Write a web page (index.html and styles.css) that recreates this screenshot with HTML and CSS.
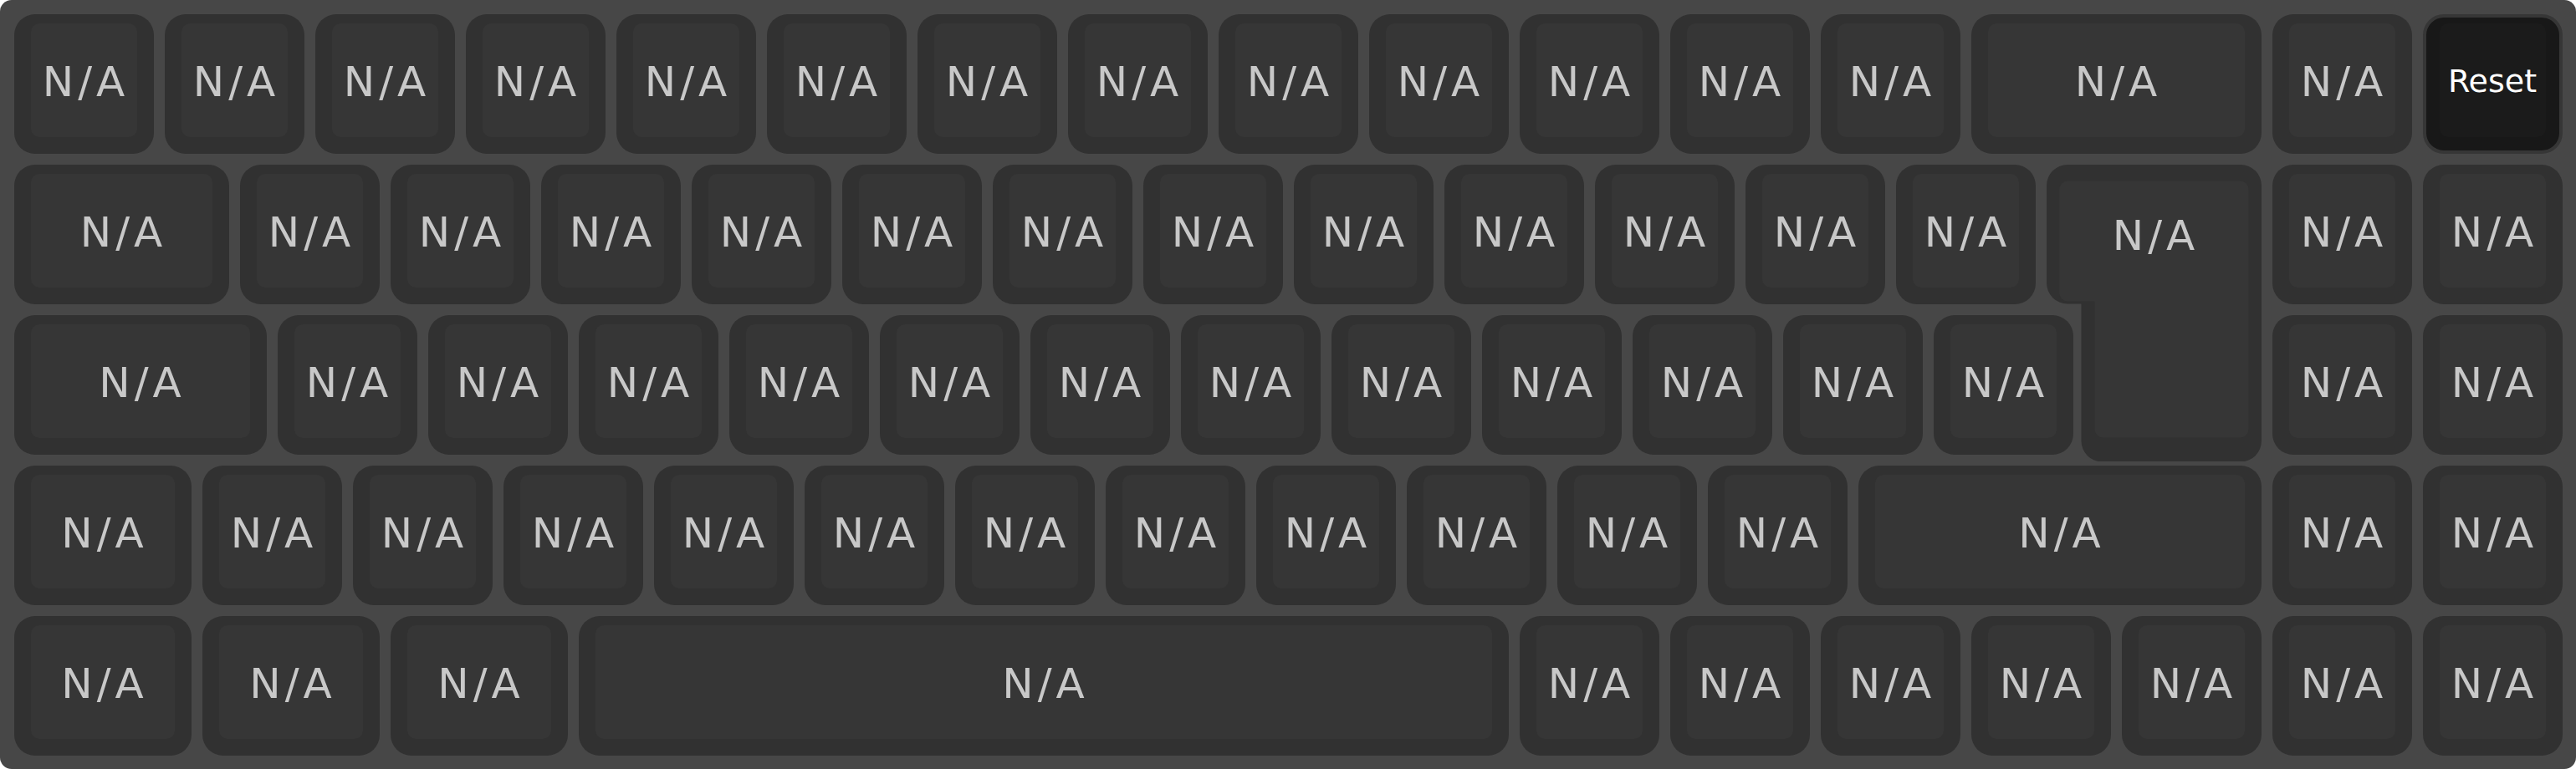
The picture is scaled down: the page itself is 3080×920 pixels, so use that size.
FILE: index.html
```html
<!DOCTYPE html>
<html lang="en">
<head>
<meta charset="utf-8">
<title>Keyboard</title>
<link rel="stylesheet" href="styles.css">
</head>
<body>
<div class="keyboard">
  <div class="row">
    <div class="key u1"><div class="face"><span class="label">N/A</span></div></div>
    <div class="key u1"><div class="face"><span class="label">N/A</span></div></div>
    <div class="key u1"><div class="face"><span class="label">N/A</span></div></div>
    <div class="key u1"><div class="face"><span class="label">N/A</span></div></div>
    <div class="key u1"><div class="face"><span class="label">N/A</span></div></div>
    <div class="key u1"><div class="face"><span class="label">N/A</span></div></div>
    <div class="key u1"><div class="face"><span class="label">N/A</span></div></div>
    <div class="key u1"><div class="face"><span class="label">N/A</span></div></div>
    <div class="key u1"><div class="face"><span class="label">N/A</span></div></div>
    <div class="key u1"><div class="face"><span class="label">N/A</span></div></div>
    <div class="key u1"><div class="face"><span class="label">N/A</span></div></div>
    <div class="key u1"><div class="face"><span class="label">N/A</span></div></div>
    <div class="key u1"><div class="face"><span class="label">N/A</span></div></div>
    <div class="key u2"><div class="face"><span class="label">N/A</span></div></div>
    <div class="key u1"><div class="face"><span class="label">N/A</span></div></div>
    <div class="key u1 reset"><div class="face"><span class="label">Reset</span></div></div>
  </div>
  <div class="row">
    <div class="key u15"><div class="face"><span class="label">N/A</span></div></div>
    <div class="key u1"><div class="face"><span class="label">N/A</span></div></div>
    <div class="key u1"><div class="face"><span class="label">N/A</span></div></div>
    <div class="key u1"><div class="face"><span class="label">N/A</span></div></div>
    <div class="key u1"><div class="face"><span class="label">N/A</span></div></div>
    <div class="key u1"><div class="face"><span class="label">N/A</span></div></div>
    <div class="key u1"><div class="face"><span class="label">N/A</span></div></div>
    <div class="key u1"><div class="face"><span class="label">N/A</span></div></div>
    <div class="key u1"><div class="face"><span class="label">N/A</span></div></div>
    <div class="key u1"><div class="face"><span class="label">N/A</span></div></div>
    <div class="key u1"><div class="face"><span class="label">N/A</span></div></div>
    <div class="key u1"><div class="face"><span class="label">N/A</span></div></div>
    <div class="key u1"><div class="face"><span class="label">N/A</span></div></div>
    <div class="key-enter">
      <svg class="enter-shape" width="257" height="355.5" viewBox="0 0 257 355.5" aria-hidden="true">
        <path fill="#313131" d="M25,0 H232 A25,25 0 0 1 257,25 V330.5 A25,25 0 0 1 232,355.5 H66.5 A25,25 0 0 1 41.5,330.5 V166.5 H25 A25,25 0 0 1 0,141.5 V25 A25,25 0 0 1 25,0 Z"/>
        <path fill="#363636" d="M25.2,19.5 H231.5 A10,10 0 0 1 241.5,29.5 V316.5 A10,10 0 0 1 231.5,326.5 H67.5 A10,10 0 0 1 57.5,316.5 V163.5 H25.2 A10,10 0 0 1 15.2,153.5 V29.5 A10,10 0 0 1 25.2,19.5 Z"/>
      </svg>
      <div class="enter-top"><span class="label">N/A</span></div>
    </div>
    <div class="key u1"><div class="face"><span class="label">N/A</span></div></div>
    <div class="key u1"><div class="face"><span class="label">N/A</span></div></div>
  </div>
  <div class="row">
    <div class="key u175"><div class="face"><span class="label">N/A</span></div></div>
    <div class="key u1"><div class="face"><span class="label">N/A</span></div></div>
    <div class="key u1"><div class="face"><span class="label">N/A</span></div></div>
    <div class="key u1"><div class="face"><span class="label">N/A</span></div></div>
    <div class="key u1"><div class="face"><span class="label">N/A</span></div></div>
    <div class="key u1"><div class="face"><span class="label">N/A</span></div></div>
    <div class="key u1"><div class="face"><span class="label">N/A</span></div></div>
    <div class="key u1"><div class="face"><span class="label">N/A</span></div></div>
    <div class="key u1"><div class="face"><span class="label">N/A</span></div></div>
    <div class="key u1"><div class="face"><span class="label">N/A</span></div></div>
    <div class="key u1"><div class="face"><span class="label">N/A</span></div></div>
    <div class="key u1"><div class="face"><span class="label">N/A</span></div></div>
    <div class="key u1"><div class="face"><span class="label">N/A</span></div></div>
    <div class="slot u125"></div>
    <div class="key u1"><div class="face"><span class="label">N/A</span></div></div>
    <div class="key u1"><div class="face"><span class="label">N/A</span></div></div>
  </div>
  <div class="row">
    <div class="key u125"><div class="face"><span class="label">N/A</span></div></div>
    <div class="key u1"><div class="face"><span class="label">N/A</span></div></div>
    <div class="key u1"><div class="face"><span class="label">N/A</span></div></div>
    <div class="key u1"><div class="face"><span class="label">N/A</span></div></div>
    <div class="key u1"><div class="face"><span class="label">N/A</span></div></div>
    <div class="key u1"><div class="face"><span class="label">N/A</span></div></div>
    <div class="key u1"><div class="face"><span class="label">N/A</span></div></div>
    <div class="key u1"><div class="face"><span class="label">N/A</span></div></div>
    <div class="key u1"><div class="face"><span class="label">N/A</span></div></div>
    <div class="key u1"><div class="face"><span class="label">N/A</span></div></div>
    <div class="key u1"><div class="face"><span class="label">N/A</span></div></div>
    <div class="key u1"><div class="face"><span class="label">N/A</span></div></div>
    <div class="key u275"><div class="face"><span class="label">N/A</span></div></div>
    <div class="key u1"><div class="face"><span class="label">N/A</span></div></div>
    <div class="key u1"><div class="face"><span class="label">N/A</span></div></div>
  </div>
  <div class="row">
    <div class="key u125"><div class="face"><span class="label">N/A</span></div></div>
    <div class="key u125"><div class="face"><span class="label">N/A</span></div></div>
    <div class="key u125"><div class="face"><span class="label">N/A</span></div></div>
    <div class="key u625"><div class="face"><span class="label">N/A</span></div></div>
    <div class="key u1"><div class="face"><span class="label">N/A</span></div></div>
    <div class="key u1"><div class="face"><span class="label">N/A</span></div></div>
    <div class="key u1"><div class="face"><span class="label">N/A</span></div></div>
    <div class="key u1"><div class="face"><span class="label">N/A</span></div></div>
    <div class="key u1"><div class="face"><span class="label">N/A</span></div></div>
    <div class="key u1"><div class="face"><span class="label">N/A</span></div></div>
    <div class="key u1"><div class="face"><span class="label">N/A</span></div></div>
  </div>
</div>
</body>
</html>
```
FILE: styles.css
```css
html, body {
  margin: 0;
  padding: 0;
  background: #ffffff;
}

.keyboard {
  width: 3080px;
  height: 920px;
  box-sizing: border-box;
  padding: 10px;
  background: #474747;
  border-radius: 14px;
  display: flex;
  flex-direction: column;
  font-family: "DejaVu Sans", "Liberation Sans", sans-serif;
}

.row {
  display: flex;
  height: 180px;
  flex: none;
}

.key {
  box-sizing: border-box;
  flex: none;
  height: 167px;
  margin: 6.5px;
  padding: 11.5px 20px 20px;
  background: #313131;
  border-radius: 25px;
  display: flex;
}

.slot {
  flex: none;
  height: 167px;
  margin: 6.5px;
}

.face {
  flex: 1;
  background: #363636;
  border-radius: 10px;
  display: flex;
  align-items: center;
  justify-content: center;
}

.label {
  display: block;
  font-size: 50px;
  line-height: 1;
  color: #c8c8c8;
  letter-spacing: 5px;
  padding: 4px 0 0 5px;
  white-space: nowrap;
}

.u1 { width: 167px; }
.u125 { width: 212px; }
.u15 { width: 257px; }
.u175 { width: 302px; }
.u2 { width: 347px; }
.u275 { width: 482px; }
.u625 { width: 1112px; }

.reset {
  background: #181818;
  border: 4px solid #363636;
  padding: 7.5px 16px 16px;
}

.reset .face {
  background: #1b1b1b;
}

.reset .label {
  color: #ffffff;
  font-size: 38px;
  letter-spacing: 0;
  padding: 3px 0 0 0;
}

.key-enter {
  flex: none;
  width: 257px;
  height: 355.5px;
  margin: 6.5px;
  align-self: flex-start;
  display: grid;
}

.enter-shape,
.enter-top {
  grid-area: 1 / 1;
}

.enter-shape {
  display: block;
}

.enter-top {
  height: 166.5px;
  display: flex;
  align-items: center;
  justify-content: center;
}
```
